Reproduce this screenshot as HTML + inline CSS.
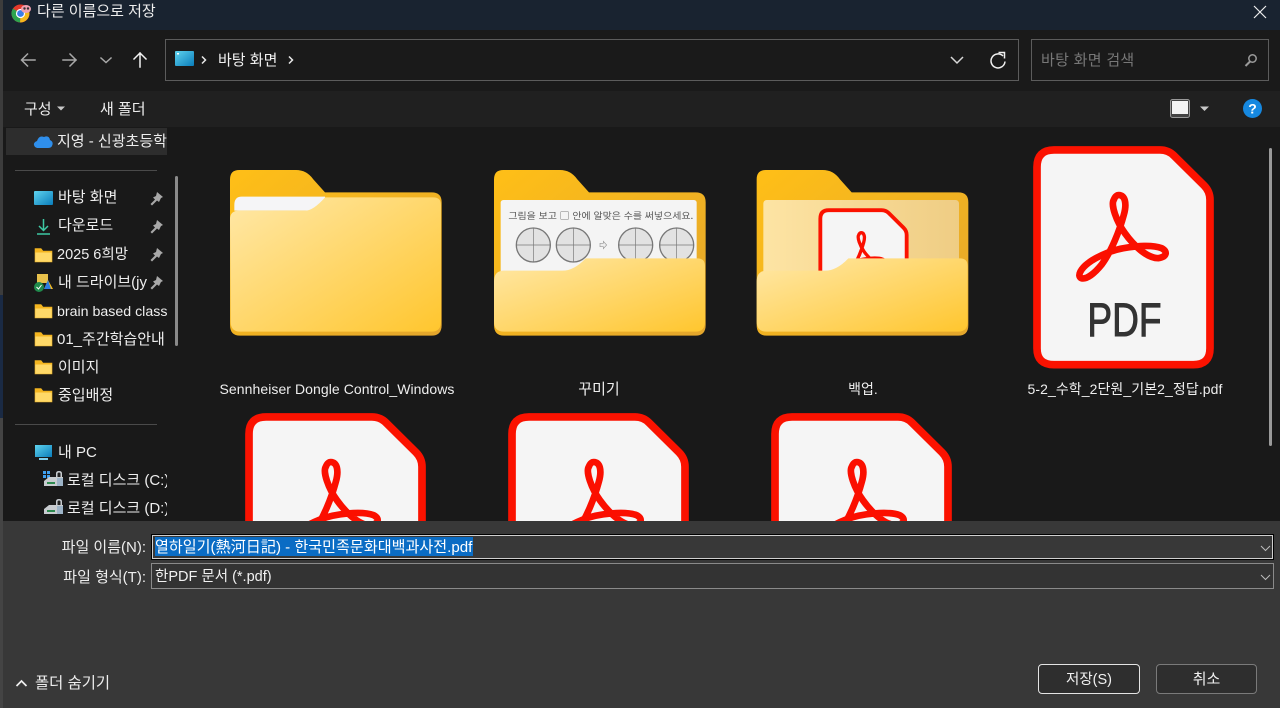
<!DOCTYPE html>
<html lang="ko"><head><meta charset="utf-8"><title>다른 이름으로 저장</title>
<style>
html,body{margin:0;padding:0;width:1280px;height:708px;overflow:hidden;background:#191919}
body{position:relative;font-family:"Liberation Sans","Noto Sans CJK KR","NanumGothic",sans-serif;font-size:15px;color:#fff}
.a{position:absolute}
.t{position:absolute;white-space:nowrap;line-height:24px}
.box{position:absolute;box-sizing:border-box;border:1px solid #5c5c5c}
.s{position:absolute;white-space:nowrap;line-height:24px;color:#eee;overflow:hidden}
.lbl{position:absolute;white-space:nowrap;line-height:20px;color:#fff;text-align:center}
</style></head><body>
<svg width="0" height="0" style="position:absolute"><defs>
<linearGradient id="gb" x1="0" y1="0" x2="1" y2="1"><stop offset="0" stop-color="#ffbf17"/><stop offset="1" stop-color="#e3a62c"/></linearGradient>
<linearGradient id="gf" x1="0" y1="0" x2="1" y2="1"><stop offset="0" stop-color="#ffe8a8"/><stop offset="1" stop-color="#ffc62e"/></linearGradient>
<linearGradient id="gp" x1="0" y1="0" x2="1" y2="0"><stop offset="0" stop-color="#fde4a4"/><stop offset="1" stop-color="#efcd84"/></linearGradient>
<linearGradient id="gd" x1="0" y1="0" x2="1" y2="1"><stop offset="0" stop-color="#5fd3ee"/><stop offset="1" stop-color="#0a7dbb"/></linearGradient>
<g id="glyph"><path d="M297 166C315 166 322 190 312 225C300 270 275 335 245 375C225 400 200 420 185 415C170 408 185 385 205 370C220 358 240 348 265 338C310 320 390 312 425 325C445 335 440 352 415 355C380 355 340 315 315 280C290 245 272 195 282 180C286 170 290 166 297 166Z" fill="none" stroke="#fb0f00" stroke-width="20" stroke-linejoin="round"/></g>
<g id="pdf"><path d="M52 82Q52 31 103 31H420Q445 31 462 48L552 137Q570 155 570 180V625Q570 674 520 674H103Q52 674 52 625Z" fill="#f5f5f5" stroke="#fb1200" stroke-width="23"/><use href="#glyph"/></g>
<path id="fb" d="M60 88Q60 60 88 60H258Q290 60 310 88L345 127H665Q695 127 695 157V525Q695 557 665 557H90Q60 557 60 525Z" fill="url(#gb)"/>
<g id="ff"><path d="M60 395Q60 362 90 362H265Q300 362 335 325H670Q693 325 693 348V515Q693 545 665 545H90Q60 545 60 515Z" fill="url(#gf)"/></g>
<g id="sf"><path d="M3 3.500H9L11 6H20V17H3Z" fill="#ffd968" stroke="#e8ad25" stroke-width=".6"/><path d="M3 3.500H9L11 6H20V7.500H3Z" fill="#f4b51f"/></g>
<path id="p" d="M10 2L16 7L14 8L12 12L10 10.500L5 15.500L3.500 14L8 9.500L6 7.500L9 6Z"/>
<g id="hd"><path d="M2 11L7 7H14V3.500Q14 1 17 1Q20 1 20 3.500V7H21V16H2Z" fill="#c8ccd0"/><path d="M15.500 7V3.800Q15.500 2.500 17 2.500Q18.500 2.500 18.500 3.800V7Z" fill="#222"/><rect x="5" y="12" width="8" height="2" fill="#2e8a50"/><rect x="15" y="8" width="6" height="8" fill="#9db4c8"/></g>
</defs></svg>

<div class="a" style="left:0;top:0;width:1280px;height:30px;background:#192330"></div>
<div class="a" style="left:0;top:30px;width:1280px;height:61px;background:#1a1a1a"></div>
<div class="a" style="left:0;top:91px;width:1280px;height:36px;background:#202020"></div>

<svg class="a" style="left:10px;top:2px" width="22" height="22" viewBox="0 0 22 22"><circle cx="10.500" cy="11.500" r="9" fill="#e5392b"/><path d="M10.500 11.500L19 9A9 9 0 0 1 10 20.500Z" fill="#f4b91d"/><path d="M10.500 11.500L3 6.500A9 9 0 0 0 10 20.500Z" fill="#2da44e"/><circle cx="10.500" cy="11.500" r="4.600" fill="#fff"/><circle cx="10.500" cy="11.500" r="3.400" fill="#3b7ee8"/><ellipse cx="16" cy="7" rx="5" ry="4" fill="#f0a0b0"/><circle cx="14.500" cy="6.500" r="1.200" fill="#333"/><circle cx="18" cy="6.500" r="1.200" fill="#333"/></svg>
<div class="t" style="left:37px;top:0;color:#eee">다른 이름으로 저장</div>
<svg class="a" style="left:1252px;top:4px" width="16" height="16"><path d="M2 2L14 14M14 2L2 14" stroke="#eee" stroke-width="1.200" fill="none"/></svg>

<svg class="a" style="left:18px;top:48px" width="140" height="24" fill="none" stroke-linecap="square"><path d="M4 12H17M9.500 6L3.500 12L9.500 18" stroke="#a8a8a8" stroke-width="1.500"/><path d="M45 12H58M52 6L58 12L52 18" stroke="#a8a8a8" stroke-width="1.500"/><path d="M83 10L88 14.500L93 10" stroke="#a8a8a8" stroke-width="1.500"/><path d="M122 5V19M116 11L122 5L128 11" stroke="#f2f2f2" stroke-width="1.500"/></svg>

<div class="box" style="left:165px;top:39px;width:854px;height:42px"></div>
<svg class="a" style="left:174px;top:50px" width="21" height="19"><rect x="1" y="1" width="19" height="15" rx="1" fill="url(#gd)"/><rect x="3" y="3" width="2" height="1.500" fill="#fff"/></svg>
<svg class="a" style="left:199px;top:53px" width="10" height="14"><path d="M3 3.500L6.500 7L3 10.500" stroke="#e8e8e8" stroke-width="1.500" fill="none"/></svg>
<div class="t" style="left:218px;top:49px;color:#f0f0f0">바탕 화면</div>
<svg class="a" style="left:286px;top:53px" width="10" height="14"><path d="M3 3.500L6.500 7L3 10.500" stroke="#e8e8e8" stroke-width="1.500" fill="none"/></svg>
<svg class="a" style="left:948px;top:50px" width="60" height="20" fill="none"><path d="M3 7L9 13L15 7" stroke="#d8d8d8" stroke-width="1.500"/><path d="M55 6A7 7 0 1 0 57 11.500" stroke="#f0f0f0" stroke-width="1.500"/><path d="M50.500 2.500H56.500V8.500" stroke="#f0f0f0" stroke-width="1.500"/></svg>

<div class="box" style="left:1031px;top:39px;width:238px;height:42px"></div>
<div class="t" style="left:1041px;top:49px;color:#777;letter-spacing:.3px">바탕 화면 검색</div>
<svg class="a" style="left:1243px;top:52px" width="16" height="16" fill="none"><circle cx="9.500" cy="6.500" r="3.700" stroke="#9a9a9a" stroke-width="1.500"/><path d="M7 9.500L2.500 14" stroke="#9a9a9a" stroke-width="2"/></svg>

<div class="t" style="left:24px;top:98px;color:#eee">구성</div>
<svg class="a" style="left:56px;top:105px" width="10" height="7"><path d="M1 1.500H9L5 5.500Z" fill="#c8c8c8"/></svg>
<div class="t" style="left:100px;top:98px;color:#eee">새 폴더</div>
<svg class="a" style="left:1170px;top:99px" width="40" height="20"><rect x="0.500" y="0.500" width="19" height="18" rx="2" fill="#444" stroke="#999"/><rect x="2" y="2" width="16" height="13" fill="#f4f4f4"/><path d="M30 7.500H39L34.500 12Z" fill="#c8c8c8"/></svg>
<svg class="a" style="left:1243px;top:99px" width="20" height="20"><circle cx="9.500" cy="9.500" r="9.500" fill="#1688e0"/><text x="9.500" y="14.500" text-anchor="middle" font-size="14" font-weight="bold" fill="#fff" font-family="Liberation Sans">?</text></svg>

<!-- sidebar -->
<div class="a" style="left:6px;top:128px;width:161px;height:27px;background:#2d2d2d"></div>
<svg class="a" style="left:33px;top:134px" width="21" height="15"><path d="M2 13Q-1 9 4 7Q6 1 11 3Q16 1 17 6Q21 8 19 12Q18 14 15 14H4Z" fill="#2f8fec"/></svg>
<div class="s" style="left:57px;top:130px;width:110px">지영 - 신광초등학교</div>
<div class="a" style="left:15px;top:170px;width:142px;height:1px;background:#4a4a4a"></div>
<div class="a" style="left:175px;top:176px;width:3px;height:170px;background:#8a8a8a;border-radius:2px"></div>

<svg class="a" style="left:33px;top:190px" width="21" height="17"><rect x="1" y="1" width="19" height="14" rx="1" fill="url(#gd)"/></svg>
<div class="s" style="left:58px;top:186px;width:100px">바탕 화면</div>
<svg class="a" style="left:34px;top:217px" width="20" height="20" fill="none" stroke="#3ec9a4" stroke-width="1.500"><path d="M9.500 2V13M5 9L9.500 13.500L14 9"/><path d="M3 17H16"/></svg>
<div class="s" style="left:58px;top:214px;width:100px">다운로드</div>
<svg class="a" style="left:32px;top:245px" width="24" height="20"><use href="#sf"/></svg>
<div class="s" style="left:57px;top:243px;width:100px;font-size:14.500px">2025 6희망</div>
<svg class="a" style="left:33px;top:273px" width="21" height="20"><rect x="4" y="1" width="11" height="9" fill="#e8c14b"/><path d="M15 7L20 16H11Z" fill="#f4b91d"/><path d="M15 7L11 16H18Z" fill="#2d7de0"/><circle cx="6" cy="14" r="5" fill="#1f8a4c"/><path d="M3.500 14L5.500 16L8.500 12" stroke="#fff" fill="none"/></svg>
<div class="s" style="left:58px;top:271px;width:90px">내 드라이브(jy</div>
<svg class="a" style="left:32px;top:301px" width="24" height="20"><use href="#sf"/></svg>
<div class="s" style="left:57px;top:300px;width:111px;font-size:14.200px">brain based class</div>
<svg class="a" style="left:32px;top:329px" width="24" height="20"><use href="#sf"/></svg>
<div class="s" style="left:57px;top:328px;width:110px">01_주간학습안내</div>
<svg class="a" style="left:32px;top:357px" width="24" height="20"><use href="#sf"/></svg>
<div class="s" style="left:58px;top:356px;width:100px">이미지</div>
<svg class="a" style="left:32px;top:385px" width="24" height="20"><use href="#sf"/></svg>
<div class="s" style="left:58px;top:384px;width:100px">중입배정</div>
<div class="a" style="left:15px;top:424px;width:142px;height:1px;background:#4a4a4a"></div>
<svg class="a" style="left:33px;top:444px" width="20" height="18"><rect x="2" y="1" width="17" height="12" fill="url(#gd)"/><rect x="6" y="14" width="9" height="2" fill="#7fd0ee"/></svg>
<div class="s" style="left:58px;top:441px;width:100px">내 PC</div>
<svg class="a" style="left:42px;top:470px" width="23" height="18"><rect x="1" y="1" width="3" height="3" fill="#3fa0f0"/><rect x="5" y="1" width="3" height="3" fill="#3fa0f0"/><rect x="1" y="5" width="3" height="3" fill="#3fa0f0"/><rect x="5" y="5" width="3" height="3" fill="#3fa0f0"/><use href="#hd"/></svg>
<div class="s" style="left:67px;top:469px;width:100px">로컬 디스크 (C:)</div>
<svg class="a" style="left:42px;top:498px" width="23" height="18"><use href="#hd"/></svg>
<div class="s" style="left:67px;top:497px;width:100px">로컬 디스크 (D:)</div>

<svg class="a" style="left:147px;top:190px" width="18" height="110" fill="#a8a8a8">
<use href="#p"/><use href="#p" y="28"/><use href="#p" y="56"/><use href="#p" y="84"/></svg>

<!-- folders -->
<svg class="a" style="left:210px;top:150px" width="260" height="200" viewBox="0 0 780 600">
<use href="#fb"/>
<path d="M73 165Q73 140 95 140H345V182H73Z" fill="#f5f5f7"/>
<path d="M60 208Q60 182 88 182H285Q310 182 345 142H670Q693 142 693 165V515Q693 545 665 545H90Q62 545 62 515Z" fill="url(#gf)"/>
</svg>

<svg class="a" style="left:480px;top:150px" width="240" height="200" viewBox="18 0 720 600">
<use href="#fb"/>
<rect x="80" y="150" width="588" height="240" rx="8" fill="#f4f4f4"/>
<text x="103" y="207" font-size="27" fill="#555" textLength="555" lengthAdjust="spacingAndGlyphs" font-family="'Noto Sans CJK KR',sans-serif">그림을 보고 □ 안에 알맞은 수를 써넣으세요.</text>
<g fill="#e2e2e2" stroke="#777" stroke-width="4">
<circle cx="178" cy="285" r="51"/><circle cx="298" cy="285" r="51"/><circle cx="485" cy="285" r="51"/><circle cx="608" cy="285" r="51"/>
</g>
<path d="M127 285H229M178 234V336M247 285H349M298 234V336M434 285H536M485 234V336M557 285H659M608 234V336" stroke="#777" stroke-width="2"/>
<path d="M378 280H388V274L398 285L388 296V290H378Z" fill="#eee" stroke="#999" stroke-width="2"/>
<use href="#ff"/>
</svg>

<svg class="a" style="left:745px;top:150px" width="240" height="200" viewBox="25 0 720 600">
<use href="#fb"/>
<rect x="80" y="150" width="587" height="240" rx="10" fill="url(#gp)"/>
<g transform="translate(225 165) scale(.5)"><use href="#pdf"/></g>
<use href="#ff"/>
</svg>

<svg class="a" style="left:1033px;top:146px" width="181" height="223" viewBox="40 20 542 666"><use href="#pdf"/><text x="203" y="588" font-size="142" fill="#333" stroke="#333" stroke-width="3" textLength="222" lengthAdjust="spacingAndGlyphs" font-family="Liberation Sans">PDF</text></svg>
<svg class="a" style="left:245px;top:413px" width="181" height="223" viewBox="40 20 542 666"><use href="#pdf"/></svg>
<svg class="a" style="left:508px;top:413px" width="181" height="223" viewBox="40 20 542 666"><use href="#pdf"/></svg>
<svg class="a" style="left:771px;top:413px" width="181" height="223" viewBox="40 20 542 666"><use href="#pdf"/></svg>

<div class="lbl" style="left:190px;top:379px;width:294px;color:#eee;letter-spacing:.07px;font-size:14px">Sennheiser Dongle Control_Windows</div>
<div class="lbl" style="left:540px;top:380px;width:118px;color:#eee">꾸미기</div>
<div class="lbl" style="left:804px;top:379px;width:118px;color:#eee;font-size:14px">백업.</div>
<div class="lbl" style="left:1005px;top:379px;width:240px;color:#eee;font-size:14px;letter-spacing:.08px">5-2_수학_2단원_기본2_정답.pdf</div>

<div class="a" style="left:1269px;top:148px;width:3px;height:298px;background:#9a9a9a;border-radius:2px"></div>

<!-- bottom -->
<div class="a" style="left:0;top:521px;width:1280px;height:187px;background:#383838"></div>
<div class="a" style="left:0;top:0;width:3px;height:295px;background:#3c3c3c"></div>
<div class="a" style="left:0;top:295px;width:3px;height:123px;background:#1a2a44"></div>
<div class="a" style="left:0;top:418px;width:3px;height:290px;background:#444"></div>

<div class="t" style="right:1134px;top:536px;color:#eee">파일 이름(N):</div>
<div class="a" style="left:151px;top:534px;width:1123px;height:26px;box-sizing:border-box;border:1px solid #000;outline:1px solid #cfcfcf;outline-offset:-2px;background:#383838"></div>
<div class="a" style="left:155px;top:537px;width:318px;height:19px;background:#0a6cc4"></div>
<div class="t" style="left:155px;top:536px;color:#fff;font-size:15.100px">열하일기(熱河日記) - 한국민족문화대백과사전.pdf</div>
<div class="t" style="right:1134px;top:566px;color:#eee">파일 형식(T):</div>
<div class="a" style="left:151px;top:563px;width:1123px;height:26px;box-sizing:border-box;border:1px solid #8a8a8a;background:#333"></div>
<div class="t" style="left:155px;top:565px;color:#f2f2f2;font-size:14.500px">한PDF 문서 (*.pdf)</div>
<svg class="a" style="left:1258px;top:541px" width="14" height="42" fill="none" stroke="#bbb"><path d="M3 5L7.500 9.500L12 5M3 34L7.500 38.500L12 34"/></svg>

<svg class="a" style="left:14px;top:676px" width="16" height="14" fill="none"><path d="M2.500 10L7.500 5L12.500 10" stroke="#eee" stroke-width="1.700"/></svg>
<div class="t" style="left:35px;top:672px;color:#eee;font-size:15.400px">폴더 숨기기</div>

<div class="a" style="left:1038px;top:664px;width:102px;height:30px;box-sizing:border-box;border:1px solid #e4e4e4;border-radius:4px;background:#2e2e2e;text-align:center;line-height:30px;color:#f0f0f0;font-size:14.500px">저장(S)</div>
<div class="a" style="left:1156px;top:664px;width:101px;height:30px;box-sizing:border-box;border:1px solid #7a7a7a;border-radius:4px;background:#2e2e2e;text-align:center;line-height:30px;color:#f0f0f0">취소</div>
</body></html>
